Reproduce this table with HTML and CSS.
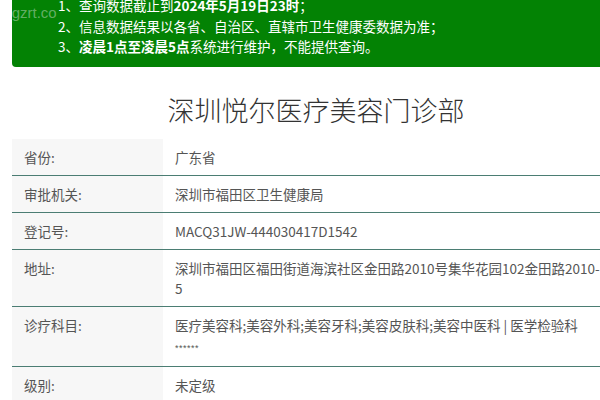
FILE: index.html
```html
<!DOCTYPE html>
<html lang="zh-CN">
<head>
<meta charset="utf-8">
<link rel="stylesheet" href="styles.css">
</head>
<body>
<div class="page">
  <div class="notice">
    <span class="mark">ingzrt.co</span>
    <ol class="notes">
      <li><span class="num">1、</span>查询数据截止到<b>2024年5月19日23时</b>；</li>
      <li><span class="num">2、</span>信息数据结果以各省、自治区、直辖市卫生健康委数据为准；</li>
      <li><span class="num">3、</span><b>凌晨1点至凌晨5点</b>系统进行维护，不能提供查询。</li>
    </ol>
  </div>
  <h1 class="title">深圳悦尔医疗美容门诊部</h1>
  <div class="info">
    <div class="row"><div class="label">省份:</div><div class="value">广东省</div></div>
    <div class="row"><div class="label">审批机关:</div><div class="value">深圳市福田区卫生健康局</div></div>
    <div class="row"><div class="label">登记号:</div><div class="value">MACQ31JW-444030417D1542</div></div>
    <div class="row"><div class="label">地址:</div><div class="value">深圳市福田区福田街道海滨社区金田路2010号集华花园102金田路2010-5</div></div>
    <div class="row"><div class="label">诊疗科目:</div><div class="value">医疗美容科;美容外科;美容牙科;美容皮肤科;美容中医科 | 医学检验科<br><span class="stars">******</span></div></div>
    <div class="row"><div class="label">级别:</div><div class="value">未定级</div></div>
  </div>
</div>
</body>
</html>
```
FILE: styles.css
```css
html, body {
  margin: 0;
  padding: 0;
  overflow: hidden;
  background: #ffffff;
}
body {
  font-family: "Noto Sans CJK SC", "Noto Sans", sans-serif;
  color: #555;
}
.page {
  width: 588px;
  margin-left: 12px;
}
.notice {
  position: relative;
  background: #038204;
  border-radius: 0 0 0 4px;
  margin-top: -8px;
  padding: 3px 0 10px 0;
  overflow: hidden;
}
.mark {
  position: absolute;
  left: -12px;
  top: 12px;
  font-family: "Liberation Sans", sans-serif;
  font-size: 15px;
  color: rgba(220, 230, 220, 0.45);
}
.notes {
  list-style: none;
  margin: 0;
  padding: 0 0 0 46px;
  color: #ffffff;
  font-size: 13.5px;
  line-height: 20.5px;
}
.notes b {
  font-weight: 700;
}
.title {
  margin: 24px 0 0 0;
  height: 48px;
  text-align: center;
  font-size: 27px;
  font-weight: 300;
  line-height: 38px;
  color: #333;
  padding-left: 20px;
}
.info {
  font-size: 13.5px;
  line-height: 20px;
}
.row {
  display: flex;
  border-bottom: 1px solid #4b7d73;
}
.label {
  width: 139px;
  flex: none;
  background: #f7f7f7;
  padding: 8px 0 8px 12px;
}
.value {
  flex: 1;
  padding: 8px 0 8px 12px;
}
.stars {
  font-family: "Liberation Sans", sans-serif;
  font-size: 9px;
  letter-spacing: 0.5px;
}
```
